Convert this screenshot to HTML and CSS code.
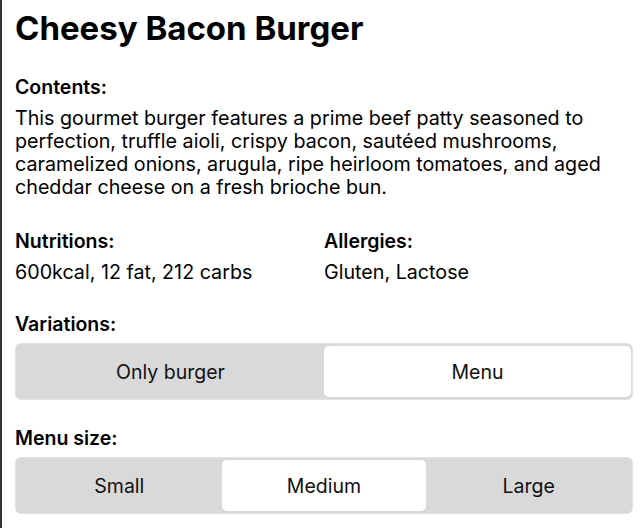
FILE: index.html
```html
<!DOCTYPE html>
<html>
<head>
<meta charset="utf-8">
<link rel="stylesheet" href="styles.css">
</head>
<body>
<div class="panel">
  <h1 class="title">Cheesy Bacon Burger</h1>
  <section class="block contents">
    <h2 class="label">Contents:</h2>
    <p class="text">This gourmet burger features a prime beef patty seasoned to perfection, truffle aioli, crispy bacon, sautéed mushrooms, caramelized onions, arugula, ripe heirloom tomatoes, and aged cheddar cheese on a fresh brioche bun.</p>
  </section>
  <section class="block grid">
    <div>
      <h2 class="label">Nutritions:</h2>
      <p class="text">600kcal, 12 fat, 212 carbs</p>
    </div>
    <div>
      <h2 class="label">Allergies:</h2>
      <p class="text">Gluten, Lactose</p>
    </div>
  </section>
  <section class="block variations">
    <h2 class="label">Variations:</h2>
    <div class="segmented two">
      <button class="seg">Only burger</button>
      <button class="seg active">Menu</button>
    </div>
  </section>
  <section class="block size">
    <h2 class="label">Menu size:</h2>
    <div class="segmented three">
      <button class="seg">Small</button>
      <button class="seg active">Medium</button>
      <button class="seg">Large</button>
    </div>
  </section>
</div>
</body>
</html>
```
FILE: styles.css
```css
* { box-sizing: border-box; }
html, body { margin: 0; padding: 0; background: #fff; }
body {
  font-family: Inter, "Noto Sans", sans-serif;
  color: #000;
}
.panel {
  border-left: 2px solid #333;
  padding: 8px 11px 14px 13px;
  min-height: 528px;
}
.title {
  margin: 0;
  font-size: 33px;
  line-height: 40px;
  font-weight: 700;
}
.contents { margin-top: 27px; }
.grid { margin-top: 30px; }
.variations { margin-top: 28px; }
.size { margin-top: 26px; }
.label {
  margin: 0;
  font-size: 19.5px;
  line-height: 24px;
  font-weight: 600;
}
.text {
  margin: 8px 0 0;
  font-size: 19.7px;
  line-height: 23px;
  font-weight: 400;
}
.grid {
  display: grid;
  grid-template-columns: 1fr 1fr;
}
.segmented {
  margin-top: 7px;
  display: grid;
  background: #d9d9d9;
  border: 1px solid #e3e3e3;
  border-radius: 6px;
  padding: 2px 1px;
}
.segmented.two { grid-template-columns: 1fr 1fr; }
.segmented.three { grid-template-columns: 1fr 1fr 1fr; }
.seg {
  font-family: inherit;
  font-size: 19.5px;
  color: #111;
  background: transparent;
  border: 0;
  border-radius: 5px;
  height: 51px;
  padding: 0;
}
.seg.active { background: #fff; }
```
